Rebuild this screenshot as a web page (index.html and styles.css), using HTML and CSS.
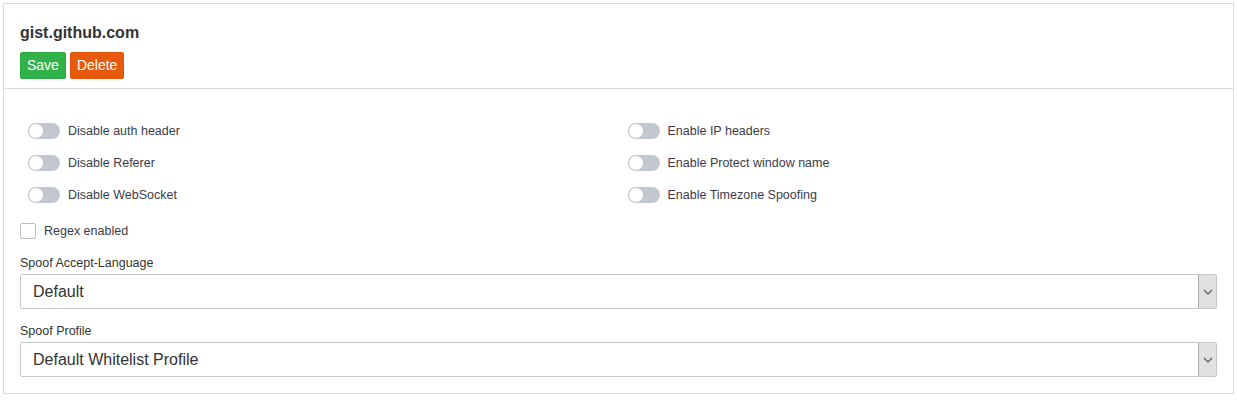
FILE: index.html
```html
<!DOCTYPE html>
<html>
<head>
<meta charset="utf-8">
<link rel="stylesheet" href="styles.css">
</head>
<body>
<div class="card">
  <div class="card-header">
    <h1 class="title">gist.github.com</h1>
    <div class="btns">
      <button class="btn btn-save">Save</button>
      <button class="btn btn-delete">Delete</button>
    </div>
  </div>
  <div class="card-body">
    <div class="toggles">
      <div class="col">
        <label class="toggle"><span class="switch"><span class="knob"></span></span><span class="tlabel">Disable auth header</span></label>
        <label class="toggle"><span class="switch"><span class="knob"></span></span><span class="tlabel">Disable Referer</span></label>
        <label class="toggle"><span class="switch"><span class="knob"></span></span><span class="tlabel">Disable WebSocket</span></label>
      </div>
      <div class="col">
        <label class="toggle"><span class="switch"><span class="knob"></span></span><span class="tlabel">Enable IP headers</span></label>
        <label class="toggle"><span class="switch"><span class="knob"></span></span><span class="tlabel">Enable Protect window name</span></label>
        <label class="toggle"><span class="switch"><span class="knob"></span></span><span class="tlabel">Enable Timezone Spoofing</span></label>
      </div>
    </div>
    <label class="check"><span class="box"></span><span class="clabel">Regex enabled</span></label>
    <div class="field">
      <div class="flabel">Spoof Accept-Language</div>
      <div class="select"><span class="value">Default</span><span class="arrow"><svg width="10" height="6" viewBox="0 0 10 6"><path d="M1 1 L5 5 L9 1" fill="none" stroke="#555" stroke-width="1.2"/></svg></span></div>
    </div>
    <div class="field">
      <div class="flabel">Spoof Profile</div>
      <div class="select"><span class="value">Default Whitelist Profile</span><span class="arrow"><svg width="10" height="6" viewBox="0 0 10 6"><path d="M1 1 L5 5 L9 1" fill="none" stroke="#555" stroke-width="1.2"/></svg></span></div>
    </div>
  </div>
</div>
</body>
</html>
```
FILE: styles.css
```css
* { box-sizing: border-box; }
html, body { margin: 0; padding: 0; background: #fff; }
body {
  padding: 3px 3px 0 3px;
  font-family: "Liberation Sans", Arial, sans-serif;
  color: #333;
}
.card {
  border: 1px solid #dcdcdf;
  width: 1231px;
  height: 391px;
}
.card-header {
  padding: 19px 16px 8px 16px;
  border-bottom: 1px solid #dcdcdf;
  height: 85px;
}
.title {
  margin: 0;
  font-size: 16px;
  font-weight: bold;
  color: #333;
  line-height: 20px;
}
.btns {
  display: flex;
  gap: 4px;
  margin-top: 9px;
}
.btn {
  border: 1px solid transparent;
  border-radius: 2px;
  color: #fff;
  font-family: "Liberation Sans", Arial, sans-serif;
  font-size: 14px;
  height: 27px;
  padding: 0 6px;
  line-height: 25px;
}
.btn-save { background: #31b34a; border-color: #2ca843; }
.btn-delete { background: #e85a0b; border-color: #de5308; }
.card-body {
  padding: 34px 16px 0 16px;
}
.toggles {
  display: grid;
  grid-template-columns: 1fr 1fr;
}
.col {
  display: flex;
  flex-direction: column;
  gap: 16px;
  padding-left: 8px;
}
.col + .col { padding-left: 9px; }
.toggle {
  display: flex;
  align-items: center;
  height: 16px;
  gap: 8px;
}
.switch {
  width: 32px;
  height: 16px;
  background: #c2c6cf;
  border-radius: 8px;
  display: flex;
  align-items: center;
}
.knob {
  width: 16px;
  height: 16px;
  border-radius: 50%;
  background: #fff;
  border: 1px solid #c2c6cf;
}
.tlabel {
  font-size: 12.5px;
  color: #3b3b48;
}
.check {
  display: flex;
  align-items: center;
  gap: 8px;
  margin-top: 20px;
  height: 16px;
}
.box {
  width: 16px;
  height: 16px;
  border: 1px solid #b8bcc4;
  border-radius: 2px;
  background: #fff;
}
.clabel {
  font-size: 12.5px;
  color: #3b3b48;
}
.field { margin-top: 17px; }
.field + .field { margin-top: 15px; }
.flabel {
  font-size: 12.5px;
  color: #333;
  line-height: 14px;
  margin-bottom: 4px;
}
.select {
  display: flex;
  align-items: stretch;
  height: 35px;
  border: 1px solid #c6c8cc;
  border-radius: 2px;
  background: #fff;
}
.value {
  flex: 1;
  font-size: 16px;
  color: #333;
  padding-left: 12px;
  display: flex;
  align-items: center;
}
.arrow {
  width: 18px;
  background: #e1e1e1;
  border-left: 1px solid #adadad;
  display: flex;
  align-items: center;
  justify-content: center;
}
```
